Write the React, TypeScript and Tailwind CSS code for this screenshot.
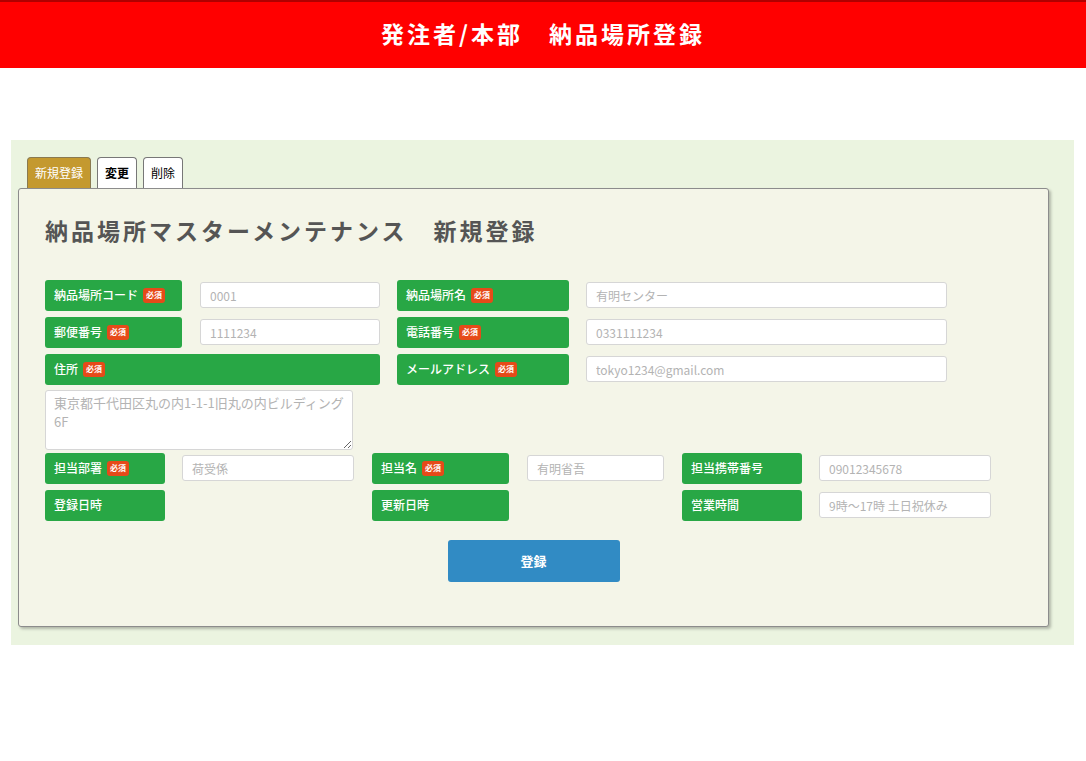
const font = { fontFamily: '"Noto Sans CJK JP", "Noto Sans", sans-serif' };

function Req() {
  return (
    <span className="ml-[5px] inline-flex h-[15px] items-center rounded-[3px] bg-[#e64a19] px-[3px] text-[8px] leading-none font-bold text-white">
      必須
    </span>
  );
}

function Label({ text, req, w }: { text: string; req?: boolean; w: string }) {
  return (
    <div className={`${w} flex h-[31px] shrink-0 items-center rounded-[3px] bg-[#28a745] pl-[9px] text-[12px] font-medium text-white`}>
      {text}
      {req && <Req />}
    </div>
  );
}

function Field({ ph, w }: { ph: string; w: string }) {
  return (
    <input
      readOnly
      placeholder={ph}
      className={`${w} h-[26px] shrink-0 rounded-[3px] border border-[#d6d6d6] bg-white px-[9px] text-[12px] placeholder:text-[#b3b3b3] outline-none`}
    />
  );
}

export default function App() {
  return (
    <div className="min-h-[761px] bg-white" style={font}>
      <header className="flex h-[68px] items-center justify-center border-t-2 border-[#b00000] bg-[#ff0000] pb-[4px]">
        <h1 className="text-[23px] font-bold tracking-[3px] text-white">発注者/本部　納品場所登録</h1>
      </header>

      <div className="mx-[11px] mt-[72px] bg-[#ebf4e0] px-[7px] pt-[17px] pb-[18px] w-[1063px]">
        <div className="flex gap-[6px] pl-[9px]">
          <div className="flex h-[31px] items-center rounded-t-[4px] border border-b-0 border-[#8a7a50] bg-[#c4992f] px-[7px] text-[12px] text-white">
            新規登録
          </div>
          <div className="flex h-[31px] items-center rounded-t-[4px] border border-b-0 border-[#777] bg-white px-[7px] text-[12px] font-bold text-black">
            変更
          </div>
          <div className="flex h-[31px] items-center rounded-t-[4px] border border-b-0 border-[#777] bg-white px-[7px] text-[12px] text-black">
            削除
          </div>
        </div>

        <div className="h-[439px] w-[1031px] rounded-[3px] border border-[#8c8c8c] bg-[#f4f5e8] px-[26px] pt-[24px] shadow-[2px_2px_3px_rgba(0,0,0,0.25)]">
          <h2 className="text-[23px] font-bold tracking-[3px] text-[#555]">納品場所マスターメンテナンス　新規登録</h2>

          <div className="mt-[32px] flex flex-col gap-[6px]">
            <div className="flex items-center">
              <Label text="納品場所コード" req w="w-[137px]" />
              <div className="w-[18px]" />
              <Field ph="0001" w="w-[180px]" />
              <div className="w-[17px]" />
              <Label text="納品場所名" req w="w-[172px]" />
              <div className="w-[17px]" />
              <Field ph="有明センター" w="w-[361px]" />
            </div>
            <div className="flex items-center">
              <Label text="郵便番号" req w="w-[137px]" />
              <div className="w-[18px]" />
              <Field ph="1111234" w="w-[180px]" />
              <div className="w-[17px]" />
              <Label text="電話番号" req w="w-[172px]" />
              <div className="w-[17px]" />
              <Field ph="0331111234" w="w-[361px]" />
            </div>
            <div className="flex items-center">
              <Label text="住所" req w="w-[335px]" />
              <div className="w-[17px]" />
              <Label text="メールアドレス" req w="w-[172px]" />
              <div className="w-[17px]" />
              <Field ph="tokyo1234@gmail.com" w="w-[361px]" />
            </div>
            <textarea
              readOnly
              placeholder="東京都千代田区丸の内1-1-1旧丸の内ビルディング6F"
              className="h-[60px] w-[308px] rounded-[3px] border border-[#d6d6d6] bg-white px-[8px] py-[2px] text-[13px] leading-[19px] placeholder:text-[#b3b3b3] outline-none -mt-[1px]"
            />
            <div className="flex items-center -mt-[3px]">
              <Label text="担当部署" req w="w-[120px]" />
              <div className="w-[17px]" />
              <Field ph="荷受係" w="w-[172px]" />
              <div className="w-[18px]" />
              <Label text="担当名" req w="w-[137px]" />
              <div className="w-[18px]" />
              <Field ph="有明省吾" w="w-[137px]" />
              <div className="w-[18px]" />
              <Label text="担当携帯番号" w="w-[120px]" />
              <div className="w-[17px]" />
              <Field ph="09012345678" w="w-[172px]" />
            </div>
            <div className="flex items-center">
              <Label text="登録日時" w="w-[120px]" />
              <div className="w-[207px]" />
              <Label text="更新日時" w="w-[137px]" />
              <div className="w-[173px]" />
              <Label text="営業時間" w="w-[120px]" />
              <div className="w-[17px]" />
              <Field ph="9時～17時 土日祝休み" w="w-[172px]" />
            </div>
          </div>

          <div className="mt-[19px] flex justify-center">
            <button className="h-[42px] w-[172px] rounded-[3px] bg-[#318bc4] text-[13px] font-bold text-white">登録</button>
          </div>
        </div>
      </div>
    </div>
  );
}
